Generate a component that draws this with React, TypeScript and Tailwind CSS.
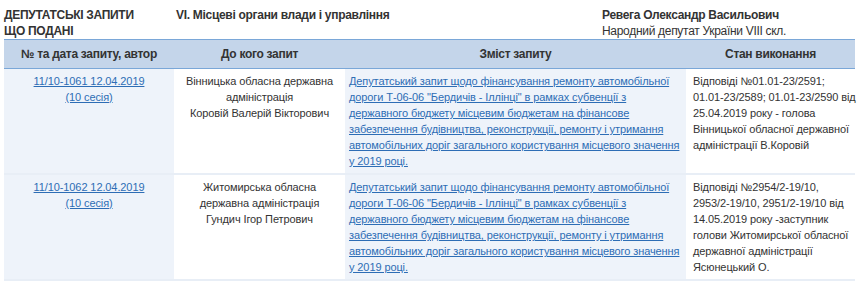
import React from "react";

type Row = {
  num: string;
  session: string;
  to: string[];
  text: string[];
  status: string[];
};

const rows: Row[] = [
  {
    num: "11/10-1061 12.04.2019",
    session: "(10 сесія)",
    to: ["Вінницька обласна державна", "адміністрація", "Коровій Валерій Вікторович"],
    text: [
      "Депутатський запит щодо фінансування ремонту автомобільної",
      "дороги Т-06-06 \"Бердичів - Іллінці\" в рамках субвенції з",
      "державного бюджету місцевим бюджетам на фінансове",
      "забезпечення будівництва, реконструкції, ремонту і утримання",
      "автомобільних доріг загального користування місцевого значення",
      "у 2019 році.",
    ],
    status: [
      "Відповіді №01.01-23/2591;",
      "01.01-23/2589; 01.01-23/2590 від",
      "25.04.2019 року - голова",
      "Вінницької обласної державної",
      "адміністрації В.Коровій",
    ],
  },
  {
    num: "11/10-1062 12.04.2019",
    session: "(10 сесія)",
    to: ["Житомирська обласна", "державна адміністрація", "Гундич Ігор Петрович"],
    text: [
      "Депутатський запит щодо фінансування ремонту автомобільної",
      "дороги Т-06-06 \"Бердичів - Іллінці\" в рамках субвенції з",
      "державного бюджету місцевим бюджетам на фінансове",
      "забезпечення будівництва, реконструкції, ремонту і утримання",
      "автомобільних доріг загального користування місцевого значення",
      "у 2019 році.",
    ],
    status: [
      "Відповіді №2954/2-19/10,",
      "2953/2-19/10, 2951/2-19/10 від",
      "14.05.2019 року -заступник",
      "голови Житомирської обласної",
      "державної адміністрації",
      "Ясюнецький О.",
    ],
  },
];

export default function App() {
  return (
    <div
      className="w-[859px] bg-white px-[4px] pt-[7px] text-[11px] leading-[16px] tracking-[-0.1px] text-[#333] whitespace-nowrap"
      style={{ fontFamily: '"Liberation Sans", Arial, sans-serif' }}
    >
      {/* title row */}
      <div className="flex text-[12px] tracking-[-0.3px]">
        <div className="w-[172px] font-bold">
          <div>ДЕПУТАТСЬКІ ЗАПИТИ</div>
          <div>ЩО ПОДАНІ</div>
        </div>
        <div className="flex-1 font-bold">VI. Місцеві органи влади і управління</div>
        <div className="w-[253px]">
          <div className="font-bold">Ревега Олександр Васильович</div>
          <div>Народний депутат України VIII скл.</div>
        </div>
      </div>

      <table className="w-[851px] table-fixed border-collapse">
        <colgroup>
          <col className="w-[170px]" />
          <col className="w-[171px]" />
          <col className="w-[341px]" />
          <col className="w-[169px]" />
        </colgroup>
        <thead>
          <tr className="h-[29px] border-y border-[#7aa7d8] bg-[#c4d5ea] text-[12px] tracking-[-0.3px]">
            <th className="font-bold">№ та дата запиту, автор</th>
            <th className="font-bold">До кого запит</th>
            <th className="font-bold">Зміст запиту</th>
            <th className="font-bold">Стан виконання</th>
          </tr>
        </thead>
        <tbody>
          {rows.map((r) => (
            <tr key={r.num} className="border-b-2 border-[#e8eef6] align-top">
              <td className="bg-[#eef3fa] px-1 pt-[4px] pb-[4px] text-center">
                <a href="#" className="text-[#2d6db5] underline">
                  {r.num}
                </a>
                <br />
                <a href="#" className="text-[#2d6db5] underline">
                  {r.session}
                </a>
              </td>
              <td className="px-1 pt-[4px] pb-[4px] text-center">
                {r.to.map((t) => (
                  <div key={t}>{t}</div>
                ))}
              </td>
              <td className="bg-[#eef3fa] pl-[4px] pr-1 pt-[4px] pb-[4px]">
                <a href="#" className="text-[#2d6db5] underline">
                  {r.text.map((t, i) => (
                    <React.Fragment key={i}>
                      {t}
                      {i < r.text.length - 1 && <br />}
                    </React.Fragment>
                  ))}
                </a>
              </td>
              <td className="pl-[7px] pr-1 pt-[4px] pb-[4px]">
                {r.status.map((t) => (
                  <div key={t}>{t}</div>
                ))}
              </td>
            </tr>
          ))}
        </tbody>
      </table>
    </div>
  );
}
